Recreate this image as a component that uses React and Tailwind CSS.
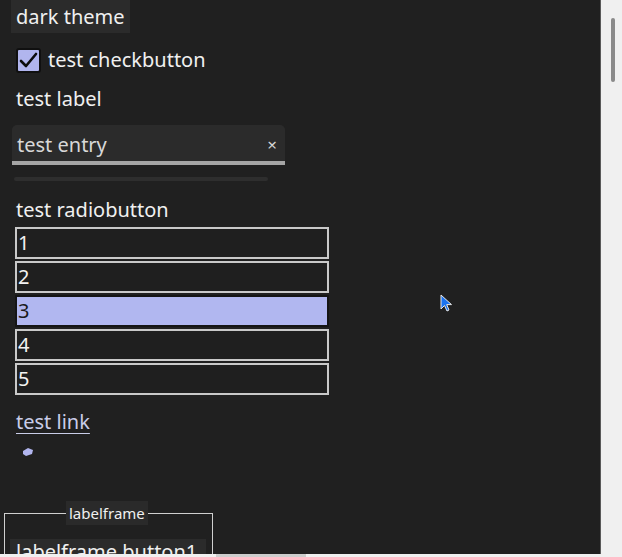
import React from "react";

const font = { fontFamily: "'Noto Sans', 'Open Sans', sans-serif" };

function Cursor() {
  return (
    <svg
      className="absolute left-[440px] top-[294px]"
      width="14"
      height="20"
      viewBox="0 0 14 20"
    >
      <path
        d="M1 1 L1 15 L4.5 11.5 L7 17 L9 16 L6.7 10.6 L11.5 10.6 Z"
        fill="#1a73f0"
        stroke="#e8e8e8"
        strokeWidth="1"
        strokeLinejoin="round"
      />
    </svg>
  );
}

function Radio({ label, selected }) {
  return (
    <div
      className={`h-[32px] w-[314px] border-2 flex items-center pl-[1px] leading-none ${
        selected
          ? "bg-[#b1b7f0] border-[#151515] text-[#1b1b1b]"
          : "bg-[#1f1f1f] border-[#c9c9c9] text-[#f2f2f2]"
      }`}
    >
      {label}
    </div>
  );
}

export default function App() {
  const items = ["1", "2", "3", "4", "5"];

  return (
    <div
      className="relative w-[622px] h-[557px] bg-[#f0f0f0] flex overflow-hidden text-[20px]"
      style={font}
    >
      {/* main scrolled area */}
      <div className="w-[601px] flex flex-col">
        <div className="h-[554px] bg-[#202020] border-r border-[#5a5a5a] overflow-hidden text-[#f0f0f0]">
          <div className="flex flex-col items-start pl-[11px]">
            <div className="h-[33px] px-[5px] bg-[#2b2b2b] flex items-center">
              dark theme
            </div>

            <div className="mt-[14px] ml-[5px] flex items-center gap-[7px] h-[26px]">
              <div className="w-[25px] h-[25px] rounded-[3px] bg-[#b1b5ee] border-2 border-[#101010] flex items-center justify-center">
                <svg width="19" height="17" viewBox="0 0 19 17">
                  <path
                    d="M2 9 L7 14 L17 2"
                    fill="none"
                    stroke="#0c0c0c"
                    strokeWidth="2.6"
                    strokeLinecap="round"
                    strokeLinejoin="round"
                  />
                </svg>
              </div>
              <span>test checkbutton</span>
            </div>

            <div className="mt-[14px] ml-[5px] h-[24px] flex items-center">
              test label
            </div>

            <div className="mt-[14px] ml-[1px] w-[273px] h-[40px] rounded-t-[5px] bg-[#2b2b2b] border-b-[4px] border-[#a5a5a5] flex items-center justify-between pl-[5px] pr-[8px] pt-[4px] text-[#d8d8d8]">
              <span>test entry</span>
              <span className="text-[17px] text-[#d4d4d4]">×</span>
            </div>

            <div className="mt-[12px] ml-[3px] w-[254px] h-[4px] rounded-full bg-[#2e2e2e]" />

            <div className="mt-[17px] ml-[5px] h-[24px] flex items-center">
              test radiobutton
            </div>

            <div className="mt-[5px] ml-[4px] flex flex-col gap-[2px]">
              {items.map((it) => (
                <Radio key={it} label={it} selected={it === "3"} />
              ))}
            </div>

            <div className="mt-[14px] ml-[5px] h-[26px] flex items-center underline underline-offset-[4px] decoration-1 text-[#c9cde8]">
              test link
            </div>

            <svg className="mt-[12px] ml-[11px]" width="12" height="10" viewBox="0 0 12 10">
              <path d="M1 4 L6 1 L11 3 L10 7 L4 9 L1 7 Z" fill="#b1b5ee" />
            </svg>

            {/* labelframe */}
            <div className="mt-[56px] -ml-[7px] relative w-[209px] h-[60px] border border-[#d0d0d0] border-b-0">
              <div className="absolute -top-[13px] left-[61px] px-[3px] h-[24px] bg-[#2a2a2a] text-[15px] flex items-center">
                labelframe
              </div>
              <div className="mt-[25px] ml-[5px] w-[196px] h-[34px] bg-[#2b2b2b] flex items-start pt-[3px] px-[6px] leading-none">
                labelframe button1
              </div>
            </div>
          </div>
        </div>
        {/* horizontal scrollbar */}
        <div className="h-[3px] bg-[#f0f0f0] pl-[216px]">
          <div className="w-[90px] h-[3px] bg-[#cdcdcd]" />
        </div>
      </div>

      {/* vertical scrollbar */}
      <div className="w-[21px] bg-[#f0f0f0] pt-[18px] pl-[10px]">
        <div className="w-[4px] h-[64px] rounded-full bg-[#8a8a8a]" />
      </div>

      <Cursor />
    </div>
  );
}
